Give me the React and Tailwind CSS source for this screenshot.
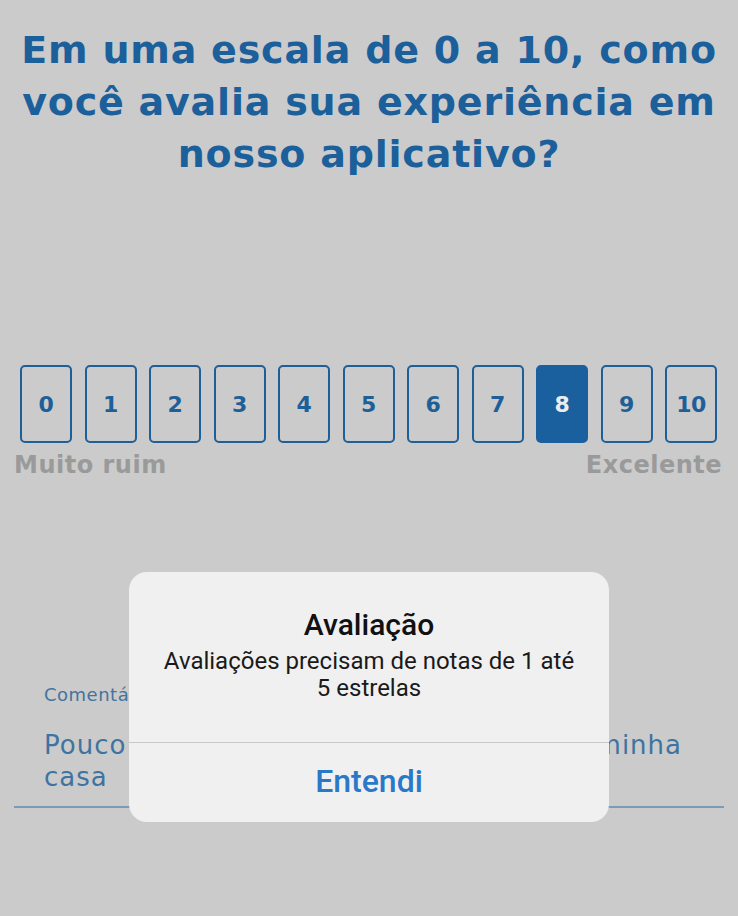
import React from "react";

const notas = [0, 1, 2, 3, 4, 5, 6, 7, 8, 9, 10];

function Escala({ selecionada }) {
    return (
        <div className="flex justify-between pl-[20px] pr-[21px]">
            {notas.map((n) => (
                <div
                    key={n}
                    className={
                        n === selecionada
                            ? "w-[52px] h-[78px] rounded-[5px] border-[2.5px] border-[#1a609f] bg-[#1a609f] text-[#e9eef3] flex items-center justify-center text-[22px] font-bold tracking-[-0.5px]"
                            : "w-[52px] h-[78px] rounded-[5px] border-[2.5px] border-[#1f5f97] text-[#1f5f97] flex items-center justify-center text-[22px] font-bold tracking-[-0.5px]"
                    }
                >
                    {n}
                </div>
            ))}
        </div>
    );
}

function Alerta() {
    return (
        <div className="absolute left-[129px] top-[572px] w-[480px] h-[250px] rounded-[18px] bg-[#f0f0f1] flex flex-col font-['Roboto',sans-serif]">
            <div className="flex flex-col items-center pt-[35px] h-[170px]">
                <p className="text-[30px] leading-[36px] font-medium text-[#111]">Avaliação</p>
                <p className="mt-[5px] text-center text-[24px] leading-[27px] text-[#1a1a1a]">
                    Avaliações precisam de notas de 1 até
                    <br />5 estrelas
                </p>
            </div>
            <div className="h-px bg-[#c9c9cc]" />
            <button className="flex-1 text-[32px] font-medium text-[#2a79c9] pb-[4px]">Entendi</button>
        </div>
    );
}

export default function App() {
    return (
        <div className="relative w-[738px] h-[916px] bg-[#cbcbcb] overflow-hidden font-['DejaVu_Sans',sans-serif]">
            <h1 className="pt-[24px] text-center text-[38px] leading-[52px] font-bold text-[#1b5f9b] tracking-[0.8px]">
                Em uma escala de 0 a 10, como
                <br />
                você avalia sua experiência em
                <br />
                nosso aplicativo?
            </h1>

            <div className="mt-[185px]">
                <Escala selecionada={8} />
                <div className="flex justify-between pl-[14px] pr-[16px] mt-[8px] text-[24px] leading-[28px] font-bold tracking-[0.5px] text-[#9a9a9a]">
                    <span>Muito ruim</span>
                    <span>Excelente</span>
                </div>
            </div>

            <div className="mt-[205px] px-[44px] text-[#44749e]">
                <p className="text-[18px] leading-[22px] tracking-[0.5px]">Comentário</p>
                <p className="mt-[23px] w-[638px] text-justify text-[26px] leading-[32px] tracking-[1px] text-[#3f73a0]">
                    Pouco espaço para guardar coisas na minha casa
                </p>
            </div>
            <div className="mx-[14px] mt-[13px] h-[2px] bg-[#7b9bb9]" />

            <Alerta />
        </div>
    );
}
